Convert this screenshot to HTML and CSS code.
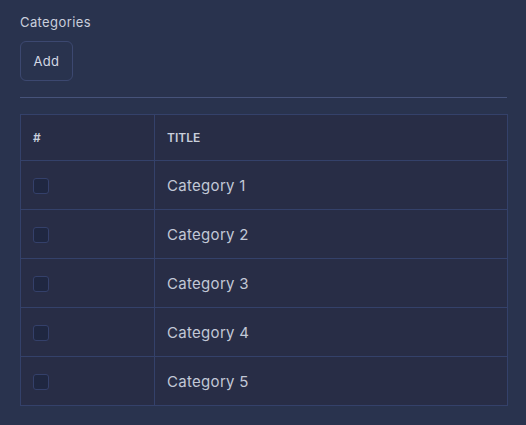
FILE: index.html
```html
<!DOCTYPE html>
<html>
<head>
<meta charset="utf-8">
<link rel="stylesheet" href="styles.css">
</head>
<body>
<div class="page">
  <div class="heading">Categories</div>
  <div class="actions"><button class="btn">Add</button></div>
  <hr class="divider">
  <table class="grid">
    <thead>
      <tr><th class="col-check">#</th><th>TITLE</th></tr>
    </thead>
    <tbody>
      <tr><td class="col-check"><span class="check"></span></td><td>Category 1</td></tr>
      <tr><td class="col-check"><span class="check"></span></td><td>Category 2</td></tr>
      <tr><td class="col-check"><span class="check"></span></td><td>Category 3</td></tr>
      <tr><td class="col-check"><span class="check"></span></td><td>Category 4</td></tr>
      <tr><td class="col-check"><span class="check"></span></td><td>Category 5</td></tr>
    </tbody>
  </table>
</div>
</body>
</html>
```
FILE: styles.css
```css
html, body {
  margin: 0;
  background: #29334e;
}
body {
  font-family: "Inter", "Noto Sans", sans-serif;
  color: #c9cfdc;
}
.page {
  padding: 13px 19px 0 20px;
}
.heading {
  font-size: 13px;
  line-height: 18px;
  letter-spacing: 0.4px;
  color: #c9cfdc;
}
.actions {
  margin-top: 10px;
}
.btn {
  width: 53px;
  height: 40px;
  padding: 0;
  background: transparent;
  border: 1px solid #3c4870;
  border-radius: 6px;
  color: #d3d8e4;
  font-family: inherit;
  font-size: 13px;
  letter-spacing: 0.3px;
}
.divider {
  margin: 16px 0 16px;
  border: 0;
  border-top: 1px solid #46537a;
  height: 0;
}
.grid {
  width: 488px;
  border-collapse: collapse;
  background: #282d46;
}
.grid th, .grid td {
  border: 1px solid #34416a;
  text-align: left;
  padding: 0 12px;
}
.grid th {
  height: 45px;
  font-size: 12px;
  font-weight: 600;
  color: #c9cfdc;
}
.grid td {
  height: 48px;
  font-size: 15px;
  letter-spacing: 0.3px;
  color: #c2c8d6;
}
.col-check {
  width: 109px;
}
.check {
  display: block;
  width: 14px;
  height: 14px;
  margin-top: 1px;
  border: 1px solid #34406a;
  border-radius: 3px;
  background: #1f2741;
}
```
